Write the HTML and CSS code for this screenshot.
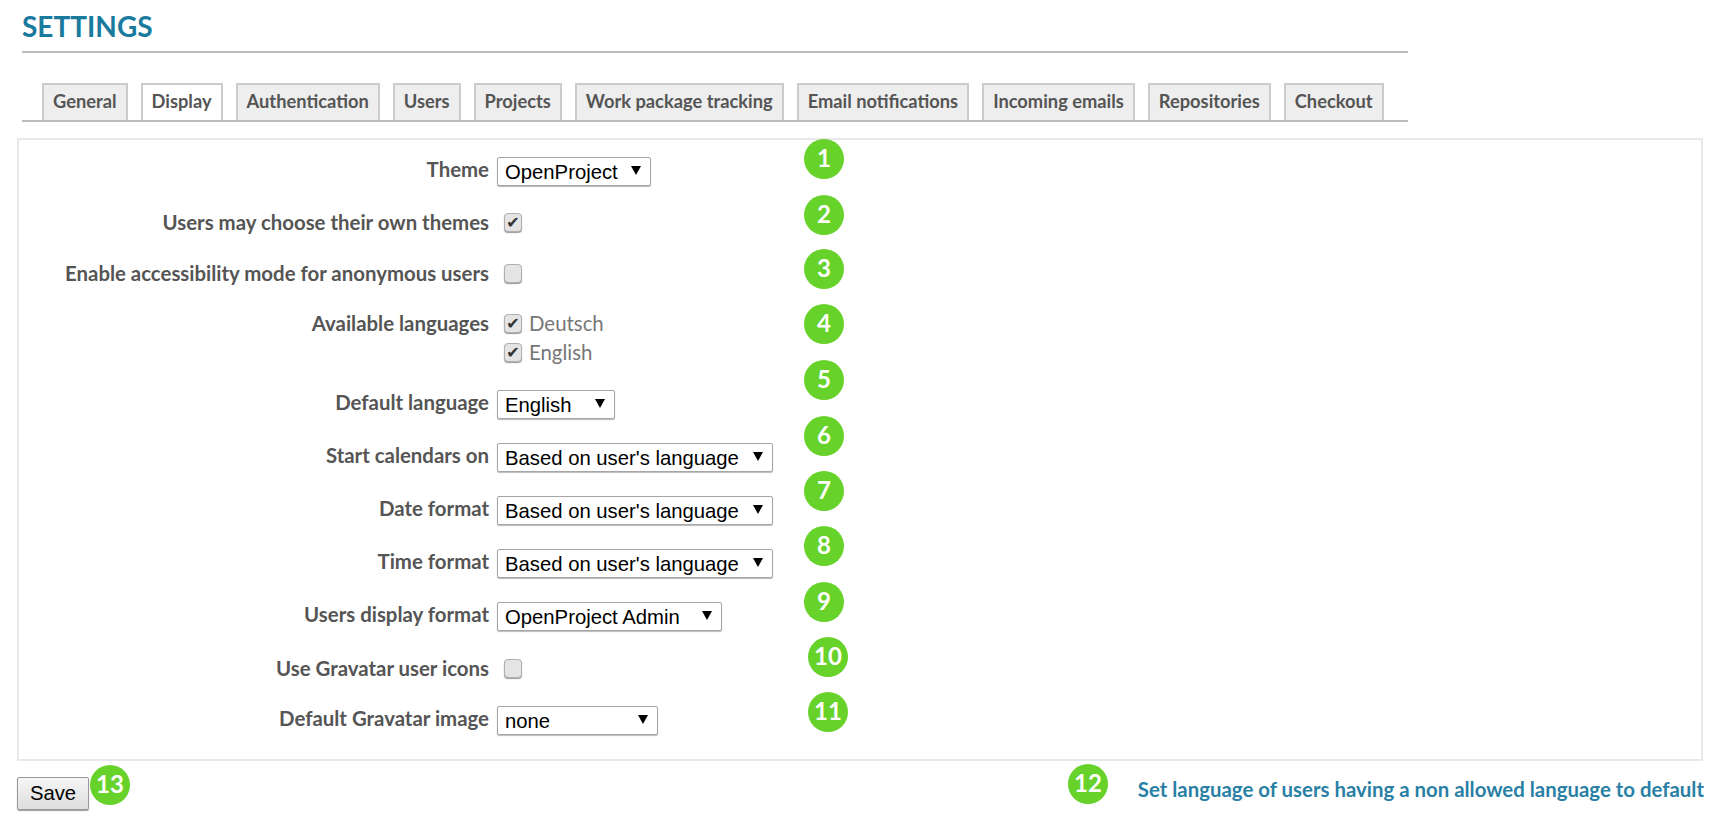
FILE: index.html
```html
<!DOCTYPE html>
<html lang="en">
<head>
    <meta charset="UTF-8">
    <meta name="viewport" content="width=device-width, initial-scale=1.0">
    <title>Settings</title>
    <link rel="stylesheet" href="styles.css">
</head>
<body>
    <div id="page-head">
        <h1>SETTINGS</h1>
    </div>

    <!-- tabs -->
    <ul id="tabs">
        <li class="tab">General</li>
        <li class="tab active">Display</li>
        <li class="tab">Authentication</li>
        <li class="tab">Users</li>
        <li class="tab">Projects</li>
        <li class="tab">Work package tracking</li>
        <li class="tab">Email notifications</li>
        <li class="tab">Incoming emails</li>
        <li class="tab">Repositories</li>
        <li class="tab">Checkout</li>
    </ul>

    <!-- settings form -->
    <form id="settings-box">
        <div class="row">
            <label class="row-label">Theme</label>
            <span class="select-wrap w-theme"><select><option>OpenProject</option></select></span>
        </div>
        <div class="row row-check">
            <label class="row-label">Users may choose their own themes</label>
            <input type="checkbox" checked>
        </div>
        <div class="row row-check row-anon">
            <label class="row-label">Enable accessibility mode for anonymous users</label>
            <input type="checkbox">
        </div>
        <div class="row row-langs">
            <label class="row-label">Available languages</label>
            <div class="lang-list">
                <label class="lang"><input type="checkbox" checked>Deutsch</label>
                <label class="lang"><input type="checkbox" checked>English</label>
            </div>
        </div>
        <div class="row">
            <label class="row-label">Default language</label>
            <span class="select-wrap w-lang"><select><option>English</option></select></span>
        </div>
        <div class="row">
            <label class="row-label">Start calendars on</label>
            <span class="select-wrap w-wide"><select><option>Based on user's language</option></select></span>
        </div>
        <div class="row">
            <label class="row-label">Date format</label>
            <span class="select-wrap w-wide"><select><option>Based on user's language</option></select></span>
        </div>
        <div class="row">
            <label class="row-label">Time format</label>
            <span class="select-wrap w-wide"><select><option>Based on user's language</option></select></span>
        </div>
        <div class="row">
            <label class="row-label">Users display format</label>
            <span class="select-wrap w-user"><select><option>OpenProject Admin</option></select></span>
        </div>
        <div class="row row-check row-gravatar">
            <label class="row-label">Use Gravatar user icons</label>
            <input type="checkbox">
        </div>
        <div class="row">
            <label class="row-label">Default Gravatar image</label>
            <span class="select-wrap w-none"><select><option>none</option></select></span>
        </div>
    </form>

    <div id="form-foot">
        <button type="button" id="save">Save</button>
        <a href="#" id="lang-link">Set language of users having a non allowed language to default</a>
    </div>

    <!-- numbered callouts drawn over the screenshot -->
    <span class="badge n1">1</span>
    <span class="badge n2">2</span>
    <span class="badge n3">3</span>
    <span class="badge n4">4</span>
    <span class="badge n5">5</span>
    <span class="badge n6">6</span>
    <span class="badge n7">7</span>
    <span class="badge n8">8</span>
    <span class="badge n9">9</span>
    <span class="badge n10">10</span>
    <span class="badge n11">11</span>
    <span class="badge n12">12</span>
    <span class="badge n13">13</span>
</body>
</html>
```
FILE: styles.css
```css
body {
    font-family: Lato, "Liberation Sans", Arial, sans-serif;
    margin: 0;
    padding: 0;
    position: relative;
    height: 828px;
    overflow: hidden;
    background: #ffffff;
    color: #555555;
}

#page-head {
    margin: 0 308px 0 22px;
    height: 51px;
    border-bottom: 2px solid #bbbbbb;
}

#page-head h1 {
    margin: 0;
    padding-top: 10px;
    font-size: 28px;
    line-height: 32px;
    font-weight: 700;
    color: #1a7a9e;
}

#tabs {
    list-style: none;
    display: flex;
    gap: 13px;
    margin: 30px 308px 0 22px;
    padding: 0 0 0 20px;
    border-bottom: 2px solid #bbbbbb;
    height: 37px;
}

.tab {
    box-sizing: border-box;
    height: 37px;
    padding: 0 9px;
    line-height: 33px;
    font-size: 18.3px;
    font-weight: 700;
    color: #555555;
    background: #eeeeee;
    border: 2px solid #cccccc;
    border-bottom: 0;
}

.tab.active {
    background: #ffffff;
}

#settings-box {
    display: flex;
    flex-direction: column;
    gap: 23px;
    box-sizing: border-box;
    height: 623px;
    margin: 16px 13px 0 17px;
    padding: 17px 0 0 0;
    border: 2px solid #e8e8e8;
}

.row {
    display: flex;
    align-items: flex-start;
    min-height: 30px;
}

.row-check {
    min-height: 28px;
}

.row-anon {
    min-height: 27px;
}

.row-gravatar {
    min-height: 27px;
    padding-top: 1px;
}

.row-label {
    box-sizing: border-box;
    width: 470px;
    flex: none;
    text-align: right;
    font-size: 20.4px;
    font-weight: 700;
    line-height: 24px;
}

.select-wrap {
    position: relative;
    box-sizing: border-box;
    display: block;
    height: 29px;
    margin-left: 8px;
    background: #ffffff;
    border: 1px solid #a6a6a6;
    border-radius: 2px;
    box-shadow: 0 1px 1px #bbbbbb;
}

.select-wrap::after {
    content: "";
    position: absolute;
    right: 9px;
    top: 8px;
    border-left: 5px solid transparent;
    border-right: 5px solid transparent;
    border-top: 9px solid #000000;
}

.select-wrap select {
    appearance: none;
    display: block;
    width: 100%;
    height: 27px;
    margin: 0;
    padding: 1px 0 0 7px;
    border: 0;
    background: transparent;
    font-family: "Liberation Sans", Arial, sans-serif;
    font-size: 20.3px;
    color: #000000;
}

.w-theme { width: 154px; }
.w-lang { width: 118px; }
.w-wide { width: 276px; }
.w-user { width: 225px; }
.w-none { width: 161px; }

input[type="checkbox"] {
    appearance: none;
    box-sizing: border-box;
    flex: none;
    width: 18px;
    height: 19px;
    margin: 3px 0 0 15px;
    background: #e4e4e4;
    border: 1px solid #b0b0b0;
    border-radius: 4px;
    box-shadow: 0 1px 1px #999999;
    text-align: center;
}

input[type="checkbox"]:checked::before {
    content: "\2714";
    display: block;
    font-family: "DejaVu Sans", sans-serif;
    font-size: 16px;
    line-height: 17px;
    color: #333333;
}

.row-langs {
    min-height: 56px;
}

.lang-list {
    display: flex;
    flex-direction: column;
    gap: 5px;
}

.lang {
    display: flex;
    align-items: flex-start;
    font-size: 20.4px;
    line-height: 24px;
    color: #777777;
}

.lang input {
    margin-right: 7px;
}

#form-foot {
    display: flex;
    justify-content: space-between;
    align-items: flex-start;
    margin: 16px 12px 0 17px;
}

#save {
    box-sizing: border-box;
    width: 72px;
    height: 33px;
    padding: 0;
    font-family: "Liberation Sans", Arial, sans-serif;
    font-size: 20.3px;
    color: #000000;
    background: linear-gradient(#f6f6f6, #dddddd);
    border: 1px solid #999999;
    border-radius: 2px;
    box-shadow: 0 1px 1px #999999;
}

#lang-link {
    font-size: 20.4px;
    font-weight: 700;
    line-height: 24px;
    color: #2a7fa5;
    text-decoration: none;
}

.badge {
    position: absolute;
    width: 40px;
    height: 40px;
    border-radius: 50%;
    background: #66d22a;
    color: #ffffff;
    font-size: 24px;
    font-weight: 700;
    line-height: 38px;
    text-align: center;
}

.n1 { left: 804px; top: 139px; }
.n2 { left: 804px; top: 195px; }
.n3 { left: 804px; top: 249px; }
.n4 { left: 804px; top: 304px; }
.n5 { left: 804px; top: 360px; }
.n6 { left: 804px; top: 416px; }
.n7 { left: 804px; top: 471px; }
.n8 { left: 804px; top: 526px; }
.n9 { left: 804px; top: 582px; }
.n10 { left: 808px; top: 637px; }
.n11 { left: 808px; top: 692px; }
.n12 { left: 1068px; top: 764px; }
.n13 { left: 90px; top: 765px; }
```
